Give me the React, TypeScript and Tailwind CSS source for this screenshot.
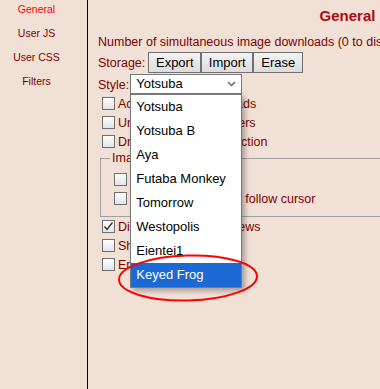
import React from "react"

const styles = ["Yotsuba", "Yotsuba B", "Aya", "Futaba Monkey", "Tomorrow", "Westopolis", "Eientei1", "Keyed Frog"]

function Box({ checked }: { checked?: boolean }) {
  return (
    <span className="ml-[4px] mr-[3px] flex h-[13px] w-[13px] shrink-0 items-center justify-center border border-[#707070] bg-linear-to-b from-white to-[#e4e4e4]">
      {checked && (
        <svg width="11" height="11" viewBox="0 0 11 11">
          <polyline points="1.5,5.5 4,8.5 9.5,1.5" fill="none" stroke="#333" strokeWidth="1.4" />
        </svg>
      )}
    </span>
  )
}

function Row({ text, checked }: { text: string; checked?: boolean }) {
  return (
    <div className="flex h-[19px] items-center whitespace-nowrap">
      <Box checked={checked} />
      <span className="pt-[2px]">{text}</span>
    </div>
  )
}

export default function App() {
  return (
    <div
      className="relative flex h-[389px] w-[380px] overflow-hidden bg-[#f0e0d6] text-[12.5px] text-[#800000]"
      style={{ fontFamily: '"Liberation Sans", Arial, sans-serif' }}
    >
      {/* Sidebar */}
      <div className="w-[88px] shrink-0 border-r border-black">
        <div className="flex w-[73px] flex-col items-center gap-[11px] pt-[3px] text-[10.5px] leading-[13px]">
          <span className="text-[#ff0000]">General</span>
          <span>User JS</span>
          <span>User CSS</span>
          <span>Filters</span>
        </div>
      </div>

      {/* Content */}
      <div className="w-[519px] shrink-0">
        <div className="pt-[7px] text-center text-[15px] font-bold leading-[18px] text-[#af0a0f]">General</div>
        <div className="pl-[10px]">
          <div className="mt-[10px] whitespace-nowrap leading-[14px]">
            Number of simultaneous image downloads (0 to disable):
          </div>

          <div className="mt-[3px] flex h-[21px] items-center">
            <span className="mr-[3px] pt-[2px]">Storage:</span>
            <div className="flex text-[13px] text-black">
              <button className="h-[21px] w-[53px] border border-[#707070] bg-linear-to-b from-[#f3f3f3] to-[#dcdcdc]">Export</button>
              <button className="h-[21px] w-[52px] border border-[#707070] bg-linear-to-b from-[#f3f3f3] to-[#dcdcdc]">Import</button>
              <button className="h-[21px] w-[50px] border border-[#707070] bg-linear-to-b from-[#f3f3f3] to-[#dcdcdc]">Erase</button>
            </div>
          </div>

          <div className="mt-[1px] flex h-[20px] items-center">
            <span className="mr-[1px] pt-[2px]">Style:</span>
            <div className="relative h-[20px] w-[112px]">
              <div className="flex h-full items-center justify-between border border-[#7a7a7a] bg-white pl-[5px] pr-[5px] text-[13px] text-black">
                <span>Yotsuba</span>
                <svg width="9" height="6" viewBox="0 0 9 6">
                  <polyline points="1,1 4.5,4.5 8,1" fill="none" stroke="#666" strokeWidth="1.5" />
                </svg>
              </div>
              {/* open dropdown */}
              <div className="absolute left-0 top-[20px] z-10 w-[112px] border border-[#7a7a7a] bg-white text-[13px] text-black shadow-[3px_3px_5px_rgba(0,0,0,0.3)]">
                {styles.map((s) => (
                  <div
                    key={s}
                    className={
                      s === "Keyed Frog"
                        ? "flex h-[24px] items-center bg-[#1b69d4] pl-[5px] text-white"
                        : "flex h-[24px] items-center pl-[5px]"
                    }
                  >
                    {s}
                  </div>
                ))}
              </div>
            </div>
          </div>

          <Row text="Accelerate all downloads" />
          <Row text="Unread title-bar counters" />
          <Row text="Draggable thread selection" />

          <fieldset className="ml-[2px] border border-[#a0a0a0] px-[9px] pb-[8px] pt-[5px]">
            <legend className="px-[2px] leading-[14px]">Image Expansion</legend>
            <Row text="Image hover" />
            <Row text="Make hover preview follow cursor" />
          </fieldset>

          <Row text="Display backlink previews" checked />
          <Row text="Show stubs" />
          <Row text="Embed links" />
        </div>
      </div>

      {/* annotation */}
      <svg className="absolute left-[116px] top-[253px] z-20" width="144" height="50" viewBox="0 0 144 50">
        <ellipse cx="72" cy="25" rx="69" ry="22.5" fill="none" stroke="#ff0000" strokeWidth="2" transform="rotate(-1.5 72 25)" />
      </svg>
    </div>
  )
}
